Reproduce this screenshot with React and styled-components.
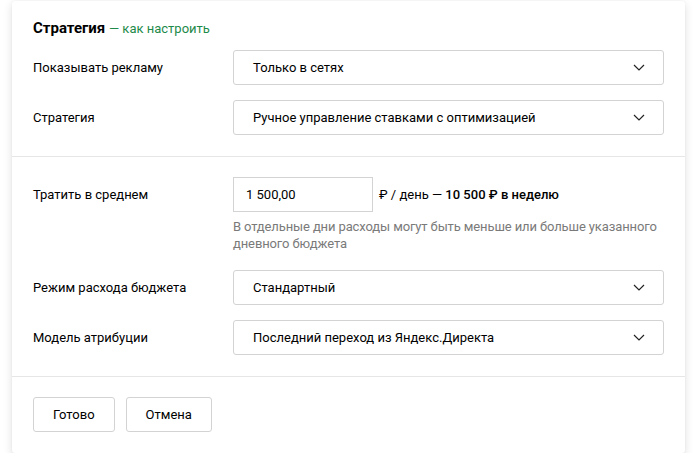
import React from "react";
import styled, { createGlobalStyle } from "styled-components";

const Global = createGlobalStyle`
  html, body { margin: 0; padding: 0; background: #fff; }
  body { font-family: Roboto, "Noto Sans", Arial, sans-serif; color: #000; }
  * { box-sizing: border-box; }
`;

const Card = styled.div`
  margin: 1px 0 0 12px;
  width: 673px;
  background: #fff;
  border-radius: 3px;
  box-shadow: 0 3px 10px rgba(0, 0, 0, 0.13), 0 0 2px rgba(0, 0, 0, 0.05);
`;

const Section = styled.div`
  padding: ${(p) => p.$pad || "20px 21px 21px"};
  display: flex;
  flex-direction: column;
  gap: ${(p) => p.$gap || "15px"};
  & + & { border-top: 1px solid #e6e6e6; }
`;

const Title = styled.div`
  font-size: 15px;
  line-height: 18px;
  margin-bottom: -3px;
`;

const Bold = styled.span`
  font-weight: 700;
`;

const Link = styled.a`
  color: #1d8a4a;
  font-size: 13px;
  text-decoration: none;
`;

const Row = styled.div`
  display: grid;
  grid-template-columns: 200px 1fr;
  align-items: ${(p) => (p.$top ? "start" : "center")};
`;

const Label = styled.div`
  font-size: 13px;
  line-height: 17px;
  padding-top: ${(p) => (p.$top ? "9px" : "0")};
`;

const Select = styled.div`
  height: 35px;
  border: 1px solid #d3d3d3;
  border-radius: 3px;
  display: flex;
  align-items: center;
  justify-content: space-between;
  padding: 0 18px 0 19px;
  font-size: 13px;
`;

const Control = styled.div`
  display: flex;
  flex-direction: column;
  gap: 6px;
`;

const InputLine = styled.div`
  display: flex;
  align-items: center;
  gap: 6px;
  font-size: 13px;
`;

const Input = styled.div`
  width: 140px;
  height: 35px;
  border: 1px solid #d3d3d3;
  display: flex;
  align-items: center;
  padding-left: 12px;
  font-size: 13px;
`;

const Medium = styled.span`
  font-weight: 500;
`;

const Hint = styled.div`
  font-size: 13px;
  line-height: 17px;
  letter-spacing: -0.12px;
  color: #7a7a7a;
  margin-bottom: 3px;
`;

const Buttons = styled.div`
  display: flex;
  gap: 11px;
`;

const Button = styled.button`
  height: 35px;
  padding: 0 ${(p) => p.$px || 20}px;
  border: 1px solid #d3d3d3;
  border-radius: 3px;
  background: #fff;
  font-family: inherit;
  font-size: 13px;
  color: #000;
`;

const Chevron = () => (
  <svg width="12" height="7" viewBox="0 0 12 7" fill="none">
    <path d="M1 1l5 5 5-5" stroke="#222" strokeWidth="1.2" />
  </svg>
);

const SelectBox = ({ children }) => (
  <Select>
    <span>{children}</span>
    <Chevron />
  </Select>
);

export default function App() {
  return (
    <>
      <Global />
      <Card>
        <Section $pad="18px 21px 21px" $gap="15px">
          <Title>
            <Bold>Стратегия</Bold> <Link>— как настроить</Link>
          </Title>
          <Row>
            <Label>Показывать рекламу</Label>
            <SelectBox>Только в сетях</SelectBox>
          </Row>
          <Row>
            <Label>Стратегия</Label>
            <SelectBox>Ручное управление ставками с оптимизацией</SelectBox>
          </Row>
        </Section>
        <Section $pad="20px 21px 21px" $gap="15px">
          <Row $top>
            <Label $top>Тратить в среднем</Label>
            <Control>
              <InputLine>
                <Input>1 500,00</Input>
                <span>
                  ₽ / день — <Medium>10 500 ₽ в неделю</Medium>
                </span>
              </InputLine>
              <Hint>
                В отдельные дни расходы могут быть меньше или больше указанного
                дневного бюджета
              </Hint>
            </Control>
          </Row>
          <Row>
            <Label>Режим расхода бюджета</Label>
            <SelectBox>Стандартный</SelectBox>
          </Row>
          <Row>
            <Label>Модель атрибуции</Label>
            <SelectBox>Последний переход из Яндекс.Директа</SelectBox>
          </Row>
        </Section>
        <Section $pad="20px 21px 21px">
          <Buttons>
            <Button $px={19}>Готово</Button>
            <Button $px={19}>Отмена</Button>
          </Buttons>
        </Section>
      </Card>
    </>
  );
}
